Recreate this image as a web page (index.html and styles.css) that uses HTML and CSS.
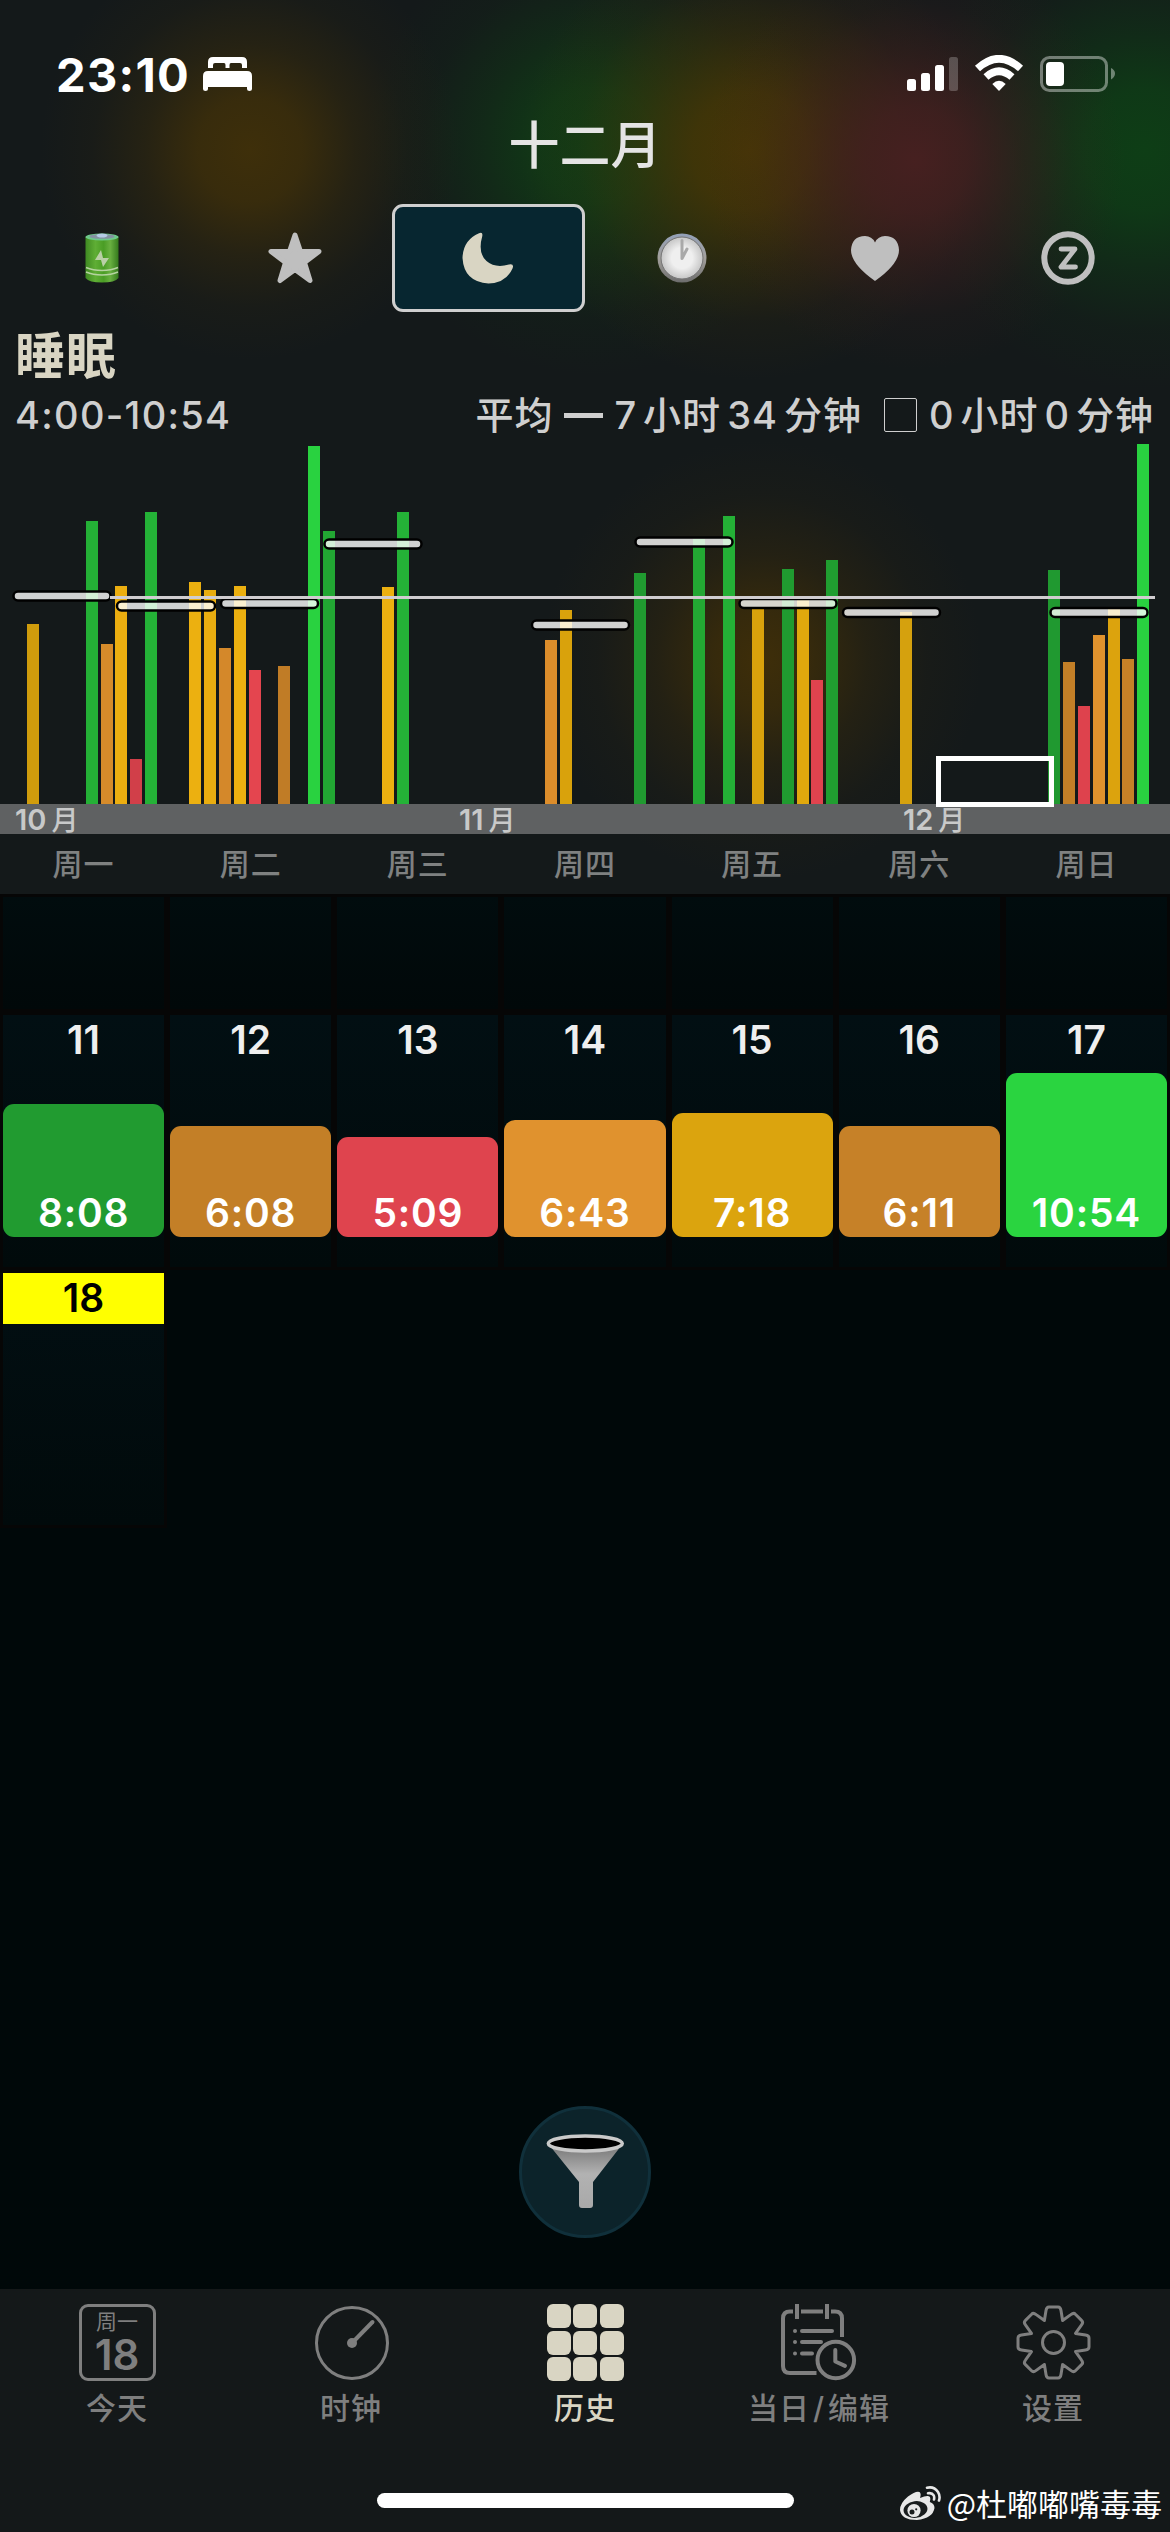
FILE: index.html
```html
<!DOCTYPE html>
<html lang="zh-CN">
<head>
    <meta charset="UTF-8">
    <meta name="viewport" content="width=device-width, initial-scale=1.0">
    <title>睡眠历史</title>
    <link rel="stylesheet" href="styles.css">
</head>
<body>
    <div class="phone">
        <header class="top">
            <div class="status-bar">
                <div class="status-left">
                    <span class="time">23:10</span>
                    <svg width="49" height="34" viewBox="0 0 49 34" fill="#fff">
                        <path d="M5 11V5Q5 0 10 0H39Q44 0 44 5V11H39V8Q39 6 37 6H28Q26.500 6 26.500 8V11H22.500V8Q22.500 6 21 6H12Q10 6 10 8V11Z"/>
                        <path d="M0 32V19Q0 14 5 14H44Q49 14 49 19V32Q49 34 46.500 34Q44 34 44 32V30H5V32Q5 34 2.500 34Q0 34 0 32Z"/>
                    </svg>
                </div>
                <svg width="210" height="38" viewBox="906 55 210 38">
                    <g fill="#fff">
                        <rect x="907" y="79" width="9" height="12" rx="2.500"/>
                        <rect x="921" y="73" width="9" height="18" rx="2.500"/>
                        <rect x="935" y="65" width="9" height="26" rx="2.500"/>
                        <rect x="949" y="57" width="9" height="34" rx="2.500" opacity="0.23"/>
                        <path d="M999 91L992.300 84Q999 77.500 1005.700 84Z"/>
                    </g>
                    <g fill="none" stroke="#fff" stroke-width="7.500">
                        <path d="M977.500 68.500Q999 49 1020.500 68.500"/>
                        <path d="M986 77Q999 65.500 1012 77"/>
                    </g>
                    <rect x="1041.500" y="57.500" width="65" height="33" rx="8" fill="none" stroke="#fff" stroke-opacity="0.4" stroke-width="3"/>
                    <rect x="1046" y="62" width="18" height="24" rx="4" fill="#fff"/>
                    <path d="M1111 68Q1115 70 1115 73.500T1111 79.500Z" fill="#fff" opacity="0.4"/>
                </svg>
            </div>

            <h1 class="month">十二月</h1>

            <nav class="metrics">
                <div class="metric">
                    <svg width="34" height="50" viewBox="0 0 34 50">
                        <defs>
                            <linearGradient id="cell" x1="0" x2="1">
                                <stop offset="0" stop-color="#3f8a22"/>
                                <stop offset="0.300" stop-color="#5fae35"/>
                                <stop offset="0.550" stop-color="#4a9d25"/>
                                <stop offset="0.750" stop-color="#69b040"/>
                                <stop offset="1" stop-color="#357a1d"/>
                            </linearGradient>
                        </defs>
                        <path d="M0.500 4V45Q4 49.500 17 49.500T33.500 45V4Z" fill="url(#cell)"/>
                        <ellipse cx="17" cy="4" rx="16.500" ry="3.500" fill="#6ec98a"/>
                        <ellipse cx="17" cy="3.500" rx="12.500" ry="2.300" fill="#8592a2"/>
                        <ellipse cx="17" cy="2.500" rx="5.500" ry="2" fill="#b6cbe6"/>
                        <path d="M1 34.500Q8 37.500 17 37.500T33 34.500M1 39Q8 42 17 42T33 39" fill="none" stroke="#b5d3a0" stroke-width="1.500"/>
                        <path d="M16 17L10 27H16L18 34L24 25H18Z" fill="#b9cfa6"/>
                    </svg>
                </div>
                <div class="metric">
                    <svg width="54" height="52" viewBox="0 0 54 52" fill="#bfbfbf" stroke="#bfbfbf" stroke-width="5" stroke-linejoin="round">
                        <path d="M27 3L32.500 19.500H51L36.500 30.500L42 48.500L27 37.500L12 48.500L17.500 30.500L3 19.500H21.500Z"/>
                    </svg>
                </div>
                <div class="metric selected">
                    <svg width="52" height="52" viewBox="0 0 52 52">
                        <path d="M17 1.200Q21 -0.500 20.300 4Q15.500 21 24.500 29Q33 36.500 47 32.500Q52.500 31.500 50.500 36.500Q44 51 26.500 51.500Q2 50 0.500 26Q1 8 17 1.200Z" fill="#d9d5c3"/>
                    </svg>
                </div>
                <div class="metric">
                    <svg width="50" height="50" viewBox="0 0 50 50">
                        <defs>
                            <linearGradient id="rim" x1="0" y1="0" x2="0" y2="1">
                                <stop offset="0" stop-color="#93a0b8"/>
                                <stop offset="0.500" stop-color="#a3a09c"/>
                                <stop offset="1" stop-color="#6d6d6d"/>
                            </linearGradient>
                            <radialGradient id="dial">
                                <stop offset="0.500" stop-color="#efefef"/>
                                <stop offset="1" stop-color="#c6c6c6"/>
                            </radialGradient>
                        </defs>
                        <circle cx="25" cy="25" r="24.500" fill="url(#rim)"/>
                        <circle cx="25" cy="25" r="21" fill="url(#dial)" stroke="#747474"/>
                        <path d="M25 7.500V25.500L30 16" fill="none" stroke="#a9a9a9" stroke-width="3" stroke-linecap="round" stroke-linejoin="round"/>
                    </svg>
                </div>
                <div class="metric">
                    <svg width="48" height="45" viewBox="0 0 48 45">
                        <path d="M24 45Q0 28 0 14Q1 0 14 0Q21 0 24 6.500Q27 0 34 0Q47 0 48 14Q48 28 24 45Z" fill="#bfbfbf"/>
                    </svg>
                </div>
                <div class="metric">
                    <svg width="54" height="54" viewBox="0 0 54 54" fill="none" stroke="#bfbfbf" stroke-linecap="round" stroke-linejoin="round">
                        <circle cx="27" cy="27" r="23.700" stroke-width="6"/>
                        <path d="M20 18H34L20 36H34.500" stroke-width="4.800"/>
                    </svg>
                </div>
            </nav>

            <h2 class="metric-name">睡眠</h2>
            <div class="summary">
                <span class="range">4:00-10:54</span>
                <div class="averages">
                    <span>平均</span>
                    <span class="dash"></span>
                    <span>7</span>
                    <span>小时</span>
                    <span>34</span>
                    <span>分钟</span>
                    <span class="box"></span>
                    <span>0</span>
                    <span>小时</span>
                    <span>0</span>
                    <span>分钟</span>
                </div>
            </div>

            <svg class="chart" width="1170" height="361" viewBox="0 443 1170 361">
                <!-- one bar per day -->
                <g>
                    <rect x="27" y="624" width="12" height="180" fill="#d09c0c"/>
                    <rect x="86" y="521" width="12" height="283" fill="#24b036"/>
                    <rect x="101" y="644" width="12" height="160" fill="#d68b2a"/>
                    <rect x="115" y="586" width="12" height="218" fill="#ecae10"/>
                    <rect x="130" y="759" width="12" height="45" fill="#d13f49"/>
                    <rect x="145" y="512" width="12" height="292" fill="#24b237"/>
                    <rect x="189" y="582" width="12" height="222" fill="#ecb010"/>
                    <rect x="204" y="590" width="12" height="214" fill="#e9ad10"/>
                    <rect x="219" y="648" width="12" height="156" fill="#d4882a"/>
                    <rect x="234" y="586" width="12" height="218" fill="#ecb010"/>
                    <rect x="249" y="670" width="12" height="134" fill="#e4454f"/>
                    <rect x="278" y="666" width="12" height="138" fill="#c07c26"/>
                    <rect x="308" y="446" width="12" height="358" fill="#29d240"/>
                    <rect x="323" y="531" width="12" height="273" fill="#22a733"/>
                    <rect x="382" y="587" width="12" height="217" fill="#ecb010"/>
                    <rect x="397" y="512" width="12" height="292" fill="#24b237"/>
                    <rect x="545" y="640" width="12" height="164" fill="#dc8d2b"/>
                    <rect x="560" y="610" width="12" height="194" fill="#d9a20c"/>
                    <rect x="634" y="573" width="12" height="231" fill="#209a30"/>
                    <rect x="693" y="539" width="12" height="265" fill="#23a833"/>
                    <rect x="723" y="516" width="12" height="288" fill="#24b036"/>
                    <rect x="752" y="609" width="12" height="195" fill="#d9a20c"/>
                    <rect x="782" y="569" width="12" height="235" fill="#209b30"/>
                    <rect x="797" y="600" width="12" height="204" fill="#e0a80d"/>
                    <rect x="811" y="680" width="12" height="124" fill="#e0434e"/>
                    <rect x="826" y="560" width="12" height="244" fill="#209e30"/>
                    <rect x="900" y="612" width="12" height="192" fill="#d5a10e"/>
                    <rect x="1048" y="570" width="12" height="234" fill="#209930"/>
                    <rect x="1063" y="662" width="12" height="142" fill="#c37f27"/>
                    <rect x="1078" y="706" width="12" height="98" fill="#de424d"/>
                    <rect x="1093" y="635" width="12" height="169" fill="#e0922d"/>
                    <rect x="1108" y="609" width="12" height="195" fill="#dca30d"/>
                    <rect x="1122" y="659" width="12" height="145" fill="#c68127"/>
                    <rect x="1137" y="444" width="12" height="360" fill="#29d240"/>
                </g>
                <!-- weekly averages -->
                <g class="week-avg">
                    <rect x="13.500" y="591.500" width="97" height="9" rx="4.500"/>
                    <rect x="117" y="601.500" width="98" height="9" rx="4.500"/>
                    <rect x="221" y="599" width="97" height="9" rx="4.500"/>
                    <rect x="324.500" y="539.500" width="97" height="9" rx="4.500"/>
                    <rect x="532" y="620.500" width="97" height="9" rx="4.500"/>
                    <rect x="635.500" y="537.500" width="97" height="9" rx="4.500"/>
                    <rect x="739.500" y="599" width="97" height="9" rx="4.500"/>
                    <rect x="843" y="608" width="97" height="9" rx="4.500"/>
                    <rect x="1050.500" y="608" width="97" height="9" rx="4.500"/>
                </g>
                <rect x="110" y="596" width="1045" height="3" fill="#d0cdd0"/>
                <rect class="window" x="938.500" y="758.500" width="113" height="46"/>
            </svg>

            <div class="months">
                <span>10<b>月</b></span>
                <span>11<b>月</b></span>
                <span>12<b>月</b></span>
            </div>

            <div class="weekdays">
                <span>周一</span>
                <span>周二</span>
                <span>周三</span>
                <span>周四</span>
                <span>周五</span>
                <span>周六</span>
                <span>周日</span>
            </div>
        </header>

        <main class="calendar">
            <div class="week past">
                <div class="day"></div>
                <div class="day"></div>
                <div class="day"></div>
                <div class="day"></div>
                <div class="day"></div>
                <div class="day"></div>
                <div class="day"></div>
            </div>
            <div class="week">
                <div class="day">
                    <span class="date">11</span>
                    <div class="sleep" style="height: 133px; background: #219b30">8:08</div>
                </div>
                <div class="day">
                    <span class="date">12</span>
                    <div class="sleep" style="height: 111px; background: #c37f27">6:08</div>
                </div>
                <div class="day">
                    <span class="date">13</span>
                    <div class="sleep" style="height: 100px; background: #df444e">5:09</div>
                </div>
                <div class="day">
                    <span class="date">14</span>
                    <div class="sleep" style="height: 117px; background: #e0922e">6:43</div>
                </div>
                <div class="day">
                    <span class="date">15</span>
                    <div class="sleep" style="height: 124px; background: #dba40e">7:18</div>
                </div>
                <div class="day">
                    <span class="date">16</span>
                    <div class="sleep" style="height: 111px; background: #c68128">6:11</div>
                </div>
                <div class="day">
                    <span class="date">17</span>
                    <div class="sleep" style="height: 164px; background: #2ad440">10:54</div>
                </div>
            </div>
            <div class="week">
                <div class="day">
                    <span class="date today">18</span>
                </div>
            </div>

            <div class="filter">
                <svg width="80" height="76" viewBox="545 2133 80 76">
                    <defs>
                        <linearGradient id="cone" x1="0" y1="0" x2="0" y2="1">
                            <stop offset="0.100" stop-color="#858585"/>
                            <stop offset="0.450" stop-color="#b2b2b2"/>
                            <stop offset="1" stop-color="#a9a9a9"/>
                        </linearGradient>
                    </defs>
                    <path d="M550 2146L579 2182V2205Q579 2208 582 2208H590Q593 2208 593 2205V2182L621 2146Z" fill="url(#cone)"/>
                    <ellipse cx="585.300" cy="2143.500" rx="37" ry="7.500" fill="#000" stroke="#cacaca" stroke-width="3.500"/>
                </svg>
            </div>
        </main>

        <footer class="bottom">
            <nav class="tabs">
                <div class="tab">
                    <div class="today-icon">
                        <span class="today-weekday">周一</span>
                        <span class="today-number">18</span>
                    </div>
                    <span>今天</span>
                </div>
                <div class="tab">
                    <svg width="77" height="77" viewBox="0 0 77 77" fill="none" stroke="#7f7f7f">
                        <circle cx="39" cy="39" r="35.500" stroke-width="3"/>
                        <path d="M39 39L59.500 18" stroke-width="4" stroke-linecap="round"/>
                        <circle cx="39" cy="39" r="5" fill="#7f7f7f" stroke="none"/>
                    </svg>
                    <span>时钟</span>
                </div>
                <div class="tab active">
                    <div class="grid-icon">
                        <i></i><i></i><i></i>
                        <i></i><i></i><i></i>
                        <i></i><i></i><i></i>
                    </div>
                    <span>历史</span>
                </div>
                <div class="tab">
                    <svg width="77" height="77" viewBox="0 0 77 77" fill="none" stroke="#7f7f7f" stroke-width="4" stroke-linecap="butt">
                        <path d="M12 7.500H9Q2 7.500 2 14.500V62Q2 69 9 69H35.500"/>
                        <path d="M20 7.500H42M50 7.500H54Q61 7.500 61 14.500V33"/>
                        <path d="M16 0V15M46 0V15"/>
                        <path d="M21 27H51M21 38H40M21 49.500H31" stroke-linecap="round"/>
                        <path d="M14 27H14.010M14 38H14.010M14 49.500H14.010" stroke-linecap="round"/>
                        <circle cx="54.800" cy="56" r="18.300"/>
                        <path d="M54.300 46V57.500L64 61.800" stroke-linecap="round" stroke-linejoin="round"/>
                    </svg>
                    <span>当日<em>/</em>编辑</span>
                </div>
                <div class="tab">
                    <svg width="77" height="77" viewBox="-38.500 -38.500 77 77" fill="none" stroke="#7f7f7f" stroke-width="3" stroke-linejoin="round">
                        <path d="M-7.500 -32Q-7 -35.500 -4.500 -35.500H4.500Q7 -35.500 7.500 -32L9.100 -22L17.300 -27.900Q20.200 -30.100 21.900 -28.300L28.300 -21.900Q30.100 -20.200 27.900 -17.300L22 -9.100L32 -7.500Q35.500 -7 35.500 -4.500V4.500Q35.500 7 32 7.500L22 9.100L27.900 17.300Q30.100 20.200 28.300 21.900L21.900 28.300Q20.200 30.100 17.300 27.900L9.100 22L7.500 32Q7 35.500 4.500 35.500H-4.500Q-7 35.500 -7.500 32L-9.100 22L-17.300 27.900Q-20.200 30.100 -21.900 28.300L-28.300 21.900Q-30.100 20.200 -27.900 17.300L-22 9.100L-32 7.500Q-35.500 7 -35.500 4.500V-4.500Q-35.500 -7 -32 -7.500L-22 -9.100L-27.900 -17.300Q-30.100 -20.200 -28.300 -21.900L-21.900 -28.300Q-20.200 -30.100 -17.300 -27.900L-9.100 -22Z"/>
                        <circle cx="0" cy="0" r="11"/>
                    </svg>
                    <span>设置</span>
                </div>
            </nav>
            <div class="home-row">
                <div class="home-indicator"></div>
                <div class="watermark">
                    <svg width="42" height="34" viewBox="0 0 42 34">
                        <path d="M0 24Q0 17 8 10.500Q16 4.500 19.500 6Q21.500 7.500 20 12Q28 8.500 30 11Q31 13 29.800 16Q34.500 17.500 34.500 22Q33 32 17 34Q1 34 0 24Z" fill="#e8e8e8"/>
                        <ellipse cx="15.500" cy="23.500" rx="12" ry="8.300" transform="rotate(-7 15.500 23.500)" fill="#191d1e"/>
                        <circle cx="14" cy="24.500" r="6.600" fill="#e8e8e8"/>
                        <circle cx="12" cy="26" r="2.500" fill="#191d1e"/>
                        <circle cx="16.200" cy="23.300" r="1.100" fill="#191d1e"/>
                        <path d="M27 1.700Q34 0 38 6Q40.500 10 39 14.500M28 7.300Q32 6.500 33.700 9.300Q34.500 11 34 13.500" fill="none" stroke="#e8e8e8" stroke-width="2.600" stroke-linecap="round"/>
                    </svg>
                    <span>@杜嘟嘟嘴毒毒</span>
                </div>
            </div>
        </footer>
    </div>
</body>
</html>
```
FILE: styles.css
```css
* {
    box-sizing: border-box;
}
body {
    margin: 0;
    background-color: #000809;
    font-family: Inter, "Noto Sans CJK SC", sans-serif;
    color: #cfcfcf;
}
svg {
    display: block;
    flex: none;
}
.phone {
    display: flex;
    flex-direction: column;
    width: 1170px;
    height: 2532px;
    overflow: hidden;
}

/* Header */
.top {
    display: flex;
    flex-direction: column;
    height: 894px;
    background:
        radial-gradient(circle 210px at 250px 150px, rgb(62, 47, 10), rgba(62, 47, 10, 0.85) 25%, rgba(62, 47, 10, 0.42) 50%, rgba(62, 47, 10, 0.12) 75%, rgba(62, 47, 10, 0)),
        radial-gradient(circle 210px at 915px 160px, rgb(70, 32, 32), rgba(70, 32, 32, 0.8) 25%, rgba(70, 32, 32, 0.42) 50%, rgba(70, 32, 32, 0.12) 75%, rgba(70, 32, 32, 0)),
        radial-gradient(circle 230px at 750px 150px, rgb(70, 54, 6), rgba(70, 54, 6, 0.85) 25%, rgba(70, 54, 6, 0.45) 50%, rgba(70, 54, 6, 0.12) 75%, rgba(70, 54, 6, 0)),
        radial-gradient(circle 240px at 1145px 150px, rgb(14, 62, 22), rgba(14, 62, 22, 0.85) 25%, rgba(14, 62, 22, 0.45) 50%, rgba(14, 62, 22, 0.12) 75%, rgba(14, 62, 22, 0)),
        radial-gradient(circle 230px at 595px 145px, rgb(16, 60, 22), rgba(16, 60, 22, 0.85) 25%, rgba(16, 60, 22, 0.45) 50%, rgba(16, 60, 22, 0.12) 75%, rgba(16, 60, 22, 0)),
        radial-gradient(circle 220px at 762px 660px, rgb(62, 46, 9), rgba(62, 46, 9, 0.8) 22%, rgba(62, 46, 9, 0.38) 48%, rgba(62, 46, 9, 0.1) 75%, rgba(62, 46, 9, 0)),
        #14191a;
}
.status-bar {
    display: flex;
    justify-content: space-between;
    align-items: center;
    height: 100px;
    padding: 48px 54px 0 56px;
}
.status-left {
    display: flex;
    align-items: center;
    gap: 13px;
}
.time {
    font-size: 47px;
    font-weight: 700;
    letter-spacing: 1.3px;
    color: #fff;
}
.month {
    height: 90px;
    margin: 0;
    font-size: 51px;
    font-weight: 500;
    line-height: 92px;
    text-align: center;
    color: #e4e4e4;
}
.metrics {
    display: grid;
    grid-template-columns: repeat(6, 1fr);
    height: 108px;
    margin: 14px 5px 0;
}
.metric {
    display: flex;
    justify-content: center;
    align-items: center;
}
.selected {
    background-color: #072630;
    border: 3px solid #cfcfcf;
    border-radius: 11px;
}
.metric-name {
    height: 64px;
    margin: 11px 0 0 15px;
    font-size: 50px;
    font-weight: 700;
    line-height: 67px;
    letter-spacing: 1px;
    color: #d9d5c3;
}
.summary {
    display: flex;
    justify-content: space-between;
    align-items: center;
    height: 56px;
    padding: 0 16px 0 15px;
    font-size: 38px;
    font-weight: 500;
    line-height: 56px;
}
.range {
    letter-spacing: 1.3px;
}
.averages {
    display: flex;
    align-items: center;
    gap: 6px;
    letter-spacing: 1px;
}
.dash {
    width: 39px;
    height: 5px;
    margin: 0 5px;
    background-color: #cfcfcf;
}
.box {
    width: 33px;
    height: 34px;
    margin: 0 6px 0 16px;
    border: 1px solid #cfcfcf;
    border-radius: 2px;
}

/* Chart */
.chart {
    position: relative;
    z-index: 1;
    overflow: visible;
}
.week-avg rect {
    fill: #fff;
    fill-opacity: 0.8;
    stroke: #000;
    stroke-width: 2.5;
}
.window {
    fill: none;
    stroke: #fff;
    stroke-width: 5;
}
.months {
    display: grid;
    grid-template-columns: 444px 444px 1fr;
    height: 30px;
    padding-left: 15px;
    background-color: #5f6162;
    font-size: 29px;
    font-weight: 600;
    line-height: 31px;
    color: #c8c9c9;
}
.months b {
    margin-left: 5px;
    font-size: 27px;
    font-weight: 500;
}
.weekdays {
    display: grid;
    grid-template-columns: repeat(7, 1fr);
    height: 60px;
    font-size: 30px;
    font-weight: 500;
    letter-spacing: 1px;
    line-height: 60px;
    text-align: center;
    color: #7f8181;
}

/* Calendar */
.calendar {
    display: flex;
    flex-direction: column;
    gap: 6px;
    height: 1395px;
    padding: 0 3px;
    border-top: 3px solid #000;
}
.week {
    display: grid;
    grid-template-columns: repeat(7, 1fr);
    gap: 6px;
    height: 252px;
}
.past {
    height: 112px;
}
.day {
    display: flex;
    flex-direction: column;
    justify-content: space-between;
    padding-bottom: 30px;
    background: linear-gradient(#020f13, #010a0b);
    box-shadow: 0 0 0 3px #060606;
    text-align: center;
    font-size: 39px;
    font-weight: 600;
}
.past .day {
    background: linear-gradient(#010c0e, #010809);
}
.date {
    height: 51px;
    line-height: 50px;
    color: #efefef;
}
.today {
    background-color: #ff0;
    color: #000;
}
.sleep {
    display: flex;
    flex-direction: column;
    justify-content: flex-end;
    border-radius: 11px;
    line-height: 48px;
    letter-spacing: 0.8px;
    color: #fff;
}
.filter {
    display: flex;
    justify-content: center;
    align-items: center;
    align-self: center;
    width: 132px;
    height: 132px;
    margin: auto 0 51px;
    padding-bottom: 2px;
    background-color: #0c232a;
    border: 3px solid #10303b;
    border-radius: 50%;
}

/* Bottom tabs */
.bottom {
    height: 243px;
    padding-top: 15px;
    background-color: #141819;
}
.tabs {
    display: grid;
    grid-template-columns: repeat(5, 1fr);
    height: 189px;
}
.tab {
    display: flex;
    flex-direction: column;
    align-items: center;
    font-size: 30px;
    font-weight: 500;
    line-height: 54px;
    letter-spacing: 1px;
    color: #7f7f7f;
}
.tab em {
    margin: 0 3px;
    font-style: normal;
}
.active {
    color: #d9d5c3;
}
.today-icon {
    display: flex;
    flex-direction: column;
    align-items: center;
    width: 77px;
    height: 77px;
    padding-top: 3px;
    border: 3px solid #7f7f7f;
    border-radius: 9px;
    letter-spacing: 0;
}
.today-weekday {
    font-size: 21px;
    font-weight: 400;
    line-height: 24px;
}
.today-number {
    font-size: 42px;
    font-weight: 600;
    line-height: 41px;
}
.grid-icon {
    display: grid;
    grid-template-columns: repeat(3, 24px);
    grid-template-rows: repeat(3, 24px);
    gap: 2.5px;
}
.grid-icon i {
    background-color: #d9d5c3;
    border-radius: 6px;
}
.home-row {
    display: grid;
    grid-template-columns: 1fr 417px 1fr;
}
.home-indicator {
    grid-column: 2;
    height: 15px;
    border-radius: 8px;
    background-color: #fff;
}
.watermark {
    display: flex;
    justify-content: flex-end;
    align-items: center;
    gap: 5px;
    height: 34px;
    margin-top: -7px;
    padding-right: 8px;
    font-family: "Noto Sans CJK SC", sans-serif;
    font-size: 31px;
    line-height: 34px;
    white-space: nowrap;
    color: #fff;
}
```
